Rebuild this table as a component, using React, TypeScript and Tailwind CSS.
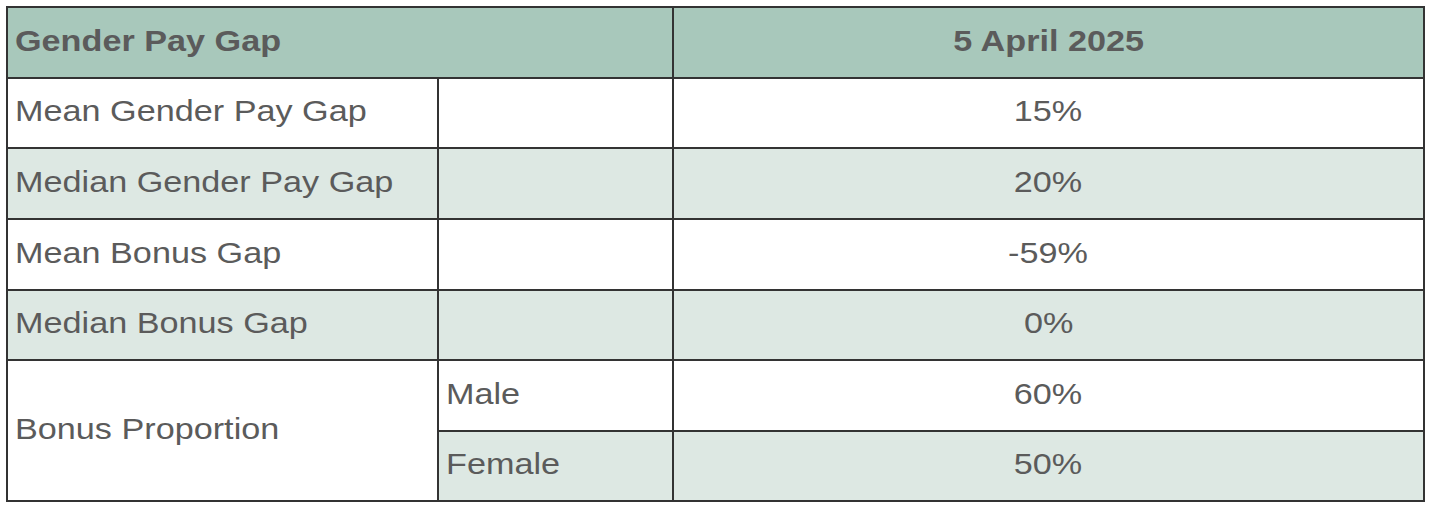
import React from "react";

const font = { fontFamily: '"Liberation Sans", Arial, sans-serif' };

function L({ children }: { children: React.ReactNode }) {
  return <span className="inline-block origin-left scale-x-[1.14] whitespace-nowrap">{children}</span>;
}
function C({ children }: { children: React.ReactNode }) {
  return <span className="inline-block origin-center scale-x-[1.14] whitespace-nowrap">{children}</span>;
}

export default function App() {
  const cell = "border-2 border-[#333333] pl-[7px] pr-[7px] pb-[4px] text-[30px] leading-[34px] text-[#5b5b5b] align-middle";
  const rows: { label: string; value: string; shaded: boolean; h: string }[] = [
    { label: "Mean Gender Pay Gap", value: "15%", shaded: false, h: "h-[70px]" },
    { label: "Median Gender Pay Gap", value: "20%", shaded: true, h: "h-[71px]" },
    { label: "Mean Bonus Gap", value: "-59%", shaded: false, h: "h-[71px]" },
    { label: "Median Bonus Gap", value: "0%", shaded: true, h: "h-[70px]" },
  ];
  return (
    <div className="w-[1430px] h-[508px] bg-white pt-[6px] pl-[6px]" style={font}>
      <table className="border-collapse table-fixed w-[1417px]">
        <colgroup>
          <col className="w-[431px]" />
          <col className="w-[235px]" />
          <col className="w-[751px]" />
        </colgroup>
        <tbody>
          <tr className="h-[71px] bg-[#a8c8bb]">
            <th colSpan={2} className={`${cell} text-left font-bold`}><L>Gender Pay Gap</L></th>
            <th className={`${cell} text-center font-bold`}><C>5 April 2025</C></th>
          </tr>
          {rows.map((r) => (
            <tr key={r.label} className={`${r.h} ${r.shaded ? "bg-[#dde8e3]" : "bg-white"}`}>
              <td className={`${cell} text-left`}><L>{r.label}</L></td>
              <td className={cell}></td>
              <td className={`${cell} text-center`}><C>{r.value}</C></td>
            </tr>
          ))}
          <tr className="h-[71px] bg-white">
            <td rowSpan={2} className={`${cell} text-left bg-white`}><L>Bonus Proportion</L></td>
            <td className={`${cell} text-left`}><L>Male</L></td>
            <td className={`${cell} text-center`}><C>60%</C></td>
          </tr>
          <tr className="h-[70px] bg-[#dde8e3]">
            <td className={`${cell} text-left`}><L>Female</L></td>
            <td className={`${cell} text-center`}><C>50%</C></td>
          </tr>
        </tbody>
      </table>
    </div>
  );
}
